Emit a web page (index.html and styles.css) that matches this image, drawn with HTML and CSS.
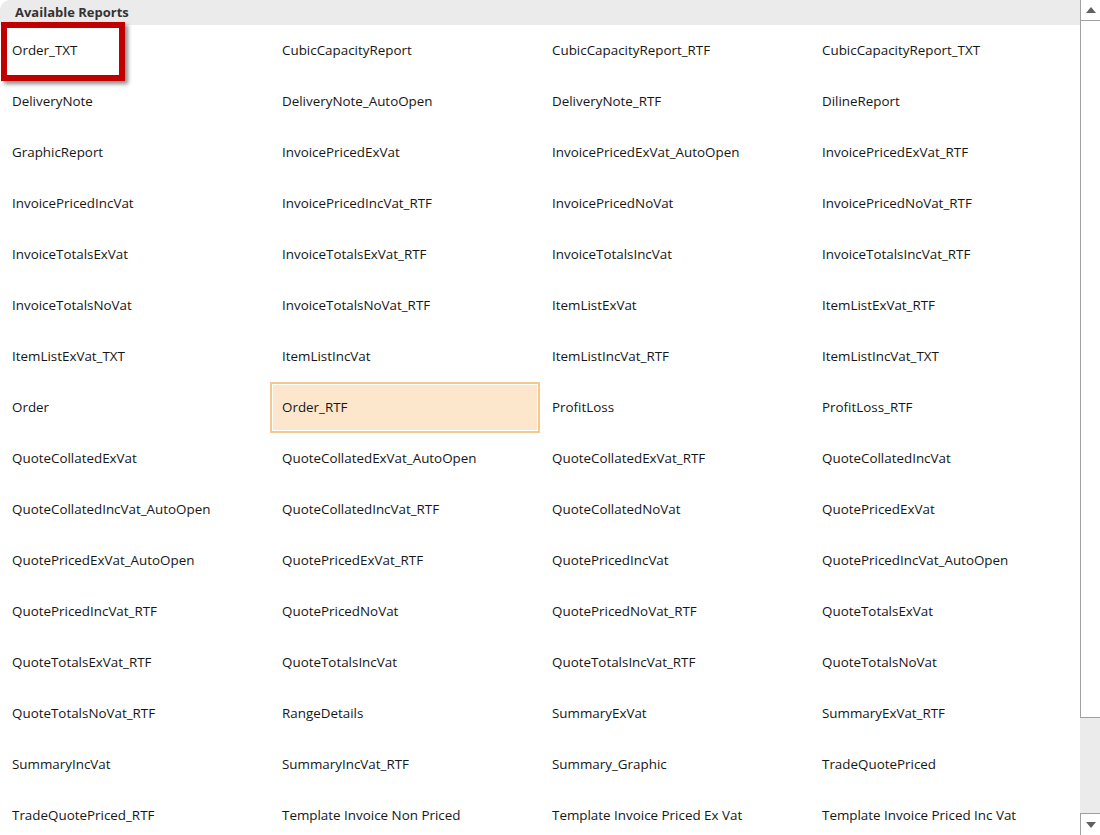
FILE: index.html
```html
<!DOCTYPE html>
<html lang="en">
<head>
    <meta charset="UTF-8">
    <title>Available Reports</title>
    <link rel="stylesheet" href="styles.css">
</head>
<body>
    <div class="panel">
        <div class="content">
            <div class="header">Available Reports</div>

            <!-- Report grid -->
            <div class="report-grid">
                <div class="report">Order_TXT<span class="callout"></span></div>
                <div class="report">CubicCapacityReport</div>
                <div class="report">CubicCapacityReport_RTF</div>
                <div class="report">CubicCapacityReport_TXT</div>

                <div class="report">DeliveryNote</div>
                <div class="report">DeliveryNote_AutoOpen</div>
                <div class="report">DeliveryNote_RTF</div>
                <div class="report">DilineReport</div>

                <div class="report">GraphicReport</div>
                <div class="report">InvoicePricedExVat</div>
                <div class="report">InvoicePricedExVat_AutoOpen</div>
                <div class="report">InvoicePricedExVat_RTF</div>

                <div class="report">InvoicePricedIncVat</div>
                <div class="report">InvoicePricedIncVat_RTF</div>
                <div class="report">InvoicePricedNoVat</div>
                <div class="report">InvoicePricedNoVat_RTF</div>

                <div class="report">InvoiceTotalsExVat</div>
                <div class="report">InvoiceTotalsExVat_RTF</div>
                <div class="report">InvoiceTotalsIncVat</div>
                <div class="report">InvoiceTotalsIncVat_RTF</div>

                <div class="report">InvoiceTotalsNoVat</div>
                <div class="report">InvoiceTotalsNoVat_RTF</div>
                <div class="report">ItemListExVat</div>
                <div class="report">ItemListExVat_RTF</div>

                <div class="report">ItemListExVat_TXT</div>
                <div class="report">ItemListIncVat</div>
                <div class="report">ItemListIncVat_RTF</div>
                <div class="report">ItemListIncVat_TXT</div>

                <div class="report">Order</div>
                <div class="report selected">Order_RTF</div>
                <div class="report">ProfitLoss</div>
                <div class="report">ProfitLoss_RTF</div>

                <div class="report">QuoteCollatedExVat</div>
                <div class="report">QuoteCollatedExVat_AutoOpen</div>
                <div class="report">QuoteCollatedExVat_RTF</div>
                <div class="report">QuoteCollatedIncVat</div>

                <div class="report">QuoteCollatedIncVat_AutoOpen</div>
                <div class="report">QuoteCollatedIncVat_RTF</div>
                <div class="report">QuoteCollatedNoVat</div>
                <div class="report">QuotePricedExVat</div>

                <div class="report">QuotePricedExVat_AutoOpen</div>
                <div class="report">QuotePricedExVat_RTF</div>
                <div class="report">QuotePricedIncVat</div>
                <div class="report">QuotePricedIncVat_AutoOpen</div>

                <div class="report">QuotePricedIncVat_RTF</div>
                <div class="report">QuotePricedNoVat</div>
                <div class="report">QuotePricedNoVat_RTF</div>
                <div class="report">QuoteTotalsExVat</div>

                <div class="report">QuoteTotalsExVat_RTF</div>
                <div class="report">QuoteTotalsIncVat</div>
                <div class="report">QuoteTotalsIncVat_RTF</div>
                <div class="report">QuoteTotalsNoVat</div>

                <div class="report">QuoteTotalsNoVat_RTF</div>
                <div class="report">RangeDetails</div>
                <div class="report">SummaryExVat</div>
                <div class="report">SummaryExVat_RTF</div>

                <div class="report">SummaryIncVat</div>
                <div class="report">SummaryIncVat_RTF</div>
                <div class="report">Summary_Graphic</div>
                <div class="report">TradeQuotePriced</div>

                <div class="report">TradeQuotePriced_RTF</div>
                <div class="report">Template Invoice Non Priced</div>
                <div class="report">Template Invoice Priced Ex Vat</div>
                <div class="report">Template Invoice Priced Inc Vat</div>
            </div>
        </div>

        <!-- Scrollbar -->
        <div class="scrollbar">
            <div class="scroll-btn up"><span class="arrow-up"></span></div>
            <div class="scroll-thumb"></div>
            <div class="scroll-track"></div>
            <div class="scroll-btn down"><span class="arrow-down"></span></div>
        </div>
    </div>
</body>
</html>
```

FILE: styles.css
```css
body {
    margin: 0;
    background-color: #ffffff;
    font-family: "Open Sans", "Noto Sans", sans-serif;
    color: #161616;
}

.panel {
    display: flex;
    width: 1100px;
    height: 835px;
    overflow: hidden;
}

.content {
    width: 1080px;
    flex-shrink: 0;
}

.header {
    height: 25px;
    box-sizing: border-box;
    padding: 3px 0 0 15px;
    background-color: #ebebeb;
    border-top-left-radius: 10px;
    font-size: 13px;
    font-weight: bold;
    color: #333333;
}

.report-grid {
    display: grid;
    grid-template-columns: repeat(4, 270px);
    grid-auto-rows: 51px;
}

.report {
    position: relative;
    display: flex;
    align-items: center;
    padding: 0 10px 2px;
    border: 2px solid transparent;
    font-size: 13.4px;
    white-space: nowrap;
}

.report.selected {
    background-color: #fde7cc;
    border-color: #f4c98f;
    box-shadow: inset 0 0 0 1px #ffffff;
}

.callout {
    position: absolute;
    left: -1px;
    top: -5px;
    width: 112px;
    height: 47px;
    border: 6px solid #c00000;
    box-shadow: 3px 3px 4px rgba(0, 0, 0, 0.45);
}

.scrollbar {
    width: 20px;
    display: flex;
    flex-direction: column;
}

.scroll-btn {
    height: 20px;
    box-sizing: border-box;
    border-left: 1px solid #a0a0a0;
    display: flex;
    justify-content: center;
    align-items: center;
}

.scroll-btn.down {
    border-top: 1px solid #a0a0a0;
    height: 22px;
}

.scroll-thumb {
    height: 698px;
    box-sizing: border-box;
    border: 1px solid #a0a0a0;
    border-right: none;
    background-color: #ffffff;
}

.scroll-track {
    flex: 1;
    background-color: #ebebeb;
}

.arrow-up {
    width: 0;
    height: 0;
    border-left: 5px solid transparent;
    border-right: 5px solid transparent;
    border-bottom: 6px solid #606060;
}

.arrow-down {
    width: 0;
    height: 0;
    border-left: 5px solid transparent;
    border-right: 5px solid transparent;
    border-top: 6px solid #606060;
}
```
